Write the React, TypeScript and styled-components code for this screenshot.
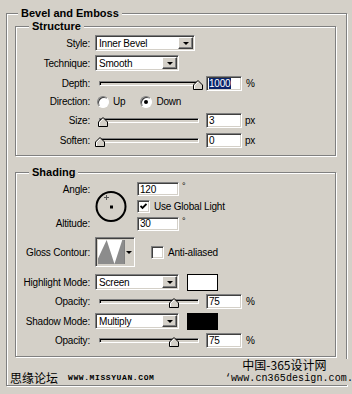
import React from 'react';
import styled, { createGlobalStyle } from 'styled-components';

const GlobalStyle = createGlobalStyle`
  html, body {
    margin: 0;
    padding: 0;
    background: #d4d0c8;
  }
  body {
    width: 352px;
    height: 394px;
    overflow: hidden;
    font-family: "Liberation Sans", Arial, sans-serif;
    font-size: 10px;
    letter-spacing: -0.2px;
    color: #000;
  }
`;

const Group = styled.fieldset<{ $pad: string }>`
  margin: 0;
  padding: ${({ $pad }) => $pad};
  min-width: 0;
  box-sizing: border-box;
  border: 1px solid #808080;
  box-shadow: inset 1px 1px 0 #fff, 1px 1px 0 #fff;
`;

const Outer = styled(Group)`
  width: 341px;
  margin: 7px 0 0 6px;
`;

const Inner = styled(Group)<{ $gap?: number }>`
  width: 321px;
  margin-top: ${({ $gap = 0 }) => $gap}px;
`;

const Legend = styled.legend<{ $ml: number }>`
  margin-left: ${({ $ml }) => $ml}px;
  padding: 0 3px;
  font-weight: bold;
  font-size: 11px;
  line-height: 13px;
  letter-spacing: 0;
  background: #d4d0c8;
`;

const Row = styled.div<{ $h: number; $mt?: number }>`
  display: flex;
  align-items: center;
  height: ${({ $h }) => $h}px;
  margin-top: ${({ $mt = 0 }) => $mt}px;
`;

const Label = styled.span`
  flex: none;
  width: 74px;
  margin-right: 5px;
  text-align: right;
  white-space: nowrap;
`;

const sunken = `
  box-sizing: border-box;
  border: 1px solid;
  border-color: #808080 #fff #fff #808080;
  box-shadow: inset 1px 1px 0 #404040, inset -1px -1px 0 #d4d0c8;
`;

const Field = styled.div<{ $w: number; $h?: number }>`
  ${sunken}
  flex: none;
  width: ${({ $w }) => $w}px;
  height: ${({ $h = 15 }) => $h}px;
  background: #fff;
  display: flex;
  align-items: center;
  padding: 0 2px;
  white-space: nowrap;
  overflow: hidden;
`;

const Picked = styled.span`
  background: #0a246a;
  color: #fff;
  padding-right: 1px;
`;

const SelectText = styled.span`
  flex: 1;
  padding-left: 1px;
`;

const DropButton = styled.span`
  flex: none;
  width: 15px;
  height: 12px;
  box-sizing: border-box;
  background: #d4d0c8;
  border: 1px solid;
  border-color: #fff #404040 #404040 #fff;
  box-shadow: inset -1px -1px 0 #808080;
  display: flex;
  align-items: center;
  justify-content: center;
  margin-right: -1px;
`;

const Arrow = styled.span`
  width: 0;
  height: 0;
  border-left: 3px solid transparent;
  border-right: 3px solid transparent;
  border-top: 3px solid #000;
`;

const Unit = styled.span<{ $ml?: number }>`
  margin-left: ${({ $ml = 4 }) => $ml}px;
`;

const SliderBox = styled.div`
  flex: none;
  width: 111px;
  height: 14px;
  box-sizing: border-box;
  padding: 0 7px 0 4px;
  display: flex;
  align-items: center;
`;

const Track = styled.div`
  position: relative;
  flex: 1;
  height: 5px;
  box-sizing: border-box;
  background: #d4d0c8;
  border: 1px solid;
  border-color: #808080 #fff #fff #808080;
  box-shadow: inset 1px 1px 0 #000;
`;

const Thumb = styled.svg`
  position: absolute;
  top: -2px;
  width: 10px;
  height: 10px;
  margin-left: -5px;
`;

const Slider = ({ value }: { value: number }) => (
  <SliderBox>
    <Track>
      <Thumb viewBox="0 0 10 10" style={{ left: `${value * 100}%` }}>
        <polygon points="5,0.5 9.5,5 9.5,9.5 0.5,9.5 0.5,5" fill="#d4d0c8" stroke="#000" />
        <polyline points="1.5,9 1.5,5.4 5,1.9" fill="none" stroke="#fff" />
      </Thumb>
    </Track>
  </SliderBox>
);

const Radios = styled.div`
  display: flex;
  align-items: center;
  gap: 15px;
  margin-left: 2px;
`;

const Option = styled.label`
  display: flex;
  align-items: center;
  gap: 4px;
`;

const Radio = styled.span<{ $on?: boolean }>`
  width: 12px;
  height: 12px;
  box-sizing: border-box;
  border-radius: 50%;
  background: #fff;
  border: 1px solid;
  border-color: #808080 #fff #fff #808080;
  box-shadow: inset 1px 1px 0 #404040;
  display: flex;
  align-items: center;
  justify-content: center;
  &::after {
    content: '';
    width: 4px;
    height: 4px;
    border-radius: 50%;
    background: ${({ $on }) => ($on ? '#000' : 'transparent')};
  }
`;

const CheckBox = styled.span<{ $ml?: number }>`
  ${sunken}
  flex: none;
  width: 13px;
  height: 13px;
  background: #fff;
  margin-left: ${({ $ml = 0 }) => $ml}px;
  margin-right: 4px;
  display: flex;
  align-items: center;
  justify-content: center;
`;

const Check = ({ on, ml }: { on?: boolean; ml?: number }) => (
  <CheckBox $ml={ml}>
    {on && (
      <svg width="7" height="7" viewBox="0 0 7 7">
        <polyline points="0.5,3 2.5,5 6.5,1" fill="none" stroke="#000" strokeWidth="1.8" />
      </svg>
    )}
  </CheckBox>
);

const AngleGrid = styled.div`
  display: grid;
  grid-template-columns: 74px 37px auto;
  grid-template-rows: 18px 17px 17px;
  column-gap: 5px;
  align-items: center;
  margin-top: 1px;
`;

const GridLabel = styled.span<{ $row: number }>`
  grid-column: 1;
  grid-row: ${({ $row }) => $row};
  text-align: right;
`;

const Cell = styled.div<{ $row: number }>`
  grid-column: 3;
  grid-row: ${({ $row }) => $row};
  display: flex;
  align-items: center;
`;

const Dial = styled.svg`
  grid-column: 2;
  grid-row: 1 / 4;
  width: 33px;
  height: 33px;
`;

const Degree = styled.span`
  align-self: flex-start;
  margin-left: 3px;
  font-size: 9px;
  line-height: 9px;
`;

const Contour = styled.div`
  ${sunken}
  flex: none;
  width: 40px;
  height: 30px;
  padding: 2px 1px 2px 2px;
  display: flex;
`;

const ContourPlot = styled.svg`
  flex: 1;
  height: 100%;
  background: #fff;
`;

const ContourButton = styled.span`
  flex: none;
  width: 8px;
  background: #d4d0c8;
  border-left: 1px solid #808080;
  display: flex;
  align-items: center;
  justify-content: center;
`;

const Swatch = styled.span<{ $color: string }>`
  flex: none;
  width: 31px;
  height: 17px;
  box-sizing: border-box;
  margin-left: 8px;
  border: 1px solid #000;
  background: ${({ $color }) => $color};
`;

const Footer = styled.div`
  height: 28px;
  margin: 0 -17px 0 -6px;
  display: flex;
  justify-content: space-between;
  align-items: flex-end;
`;

const ForumMark = styled.div`
  display: flex;
  align-items: center;
  gap: 10px;
  margin: 0 0 1px 1px;
`;

const ForumName = styled.span`
  font-family: "Noto Sans CJK SC", sans-serif;
  font-size: 12px;
  line-height: 13px;
  letter-spacing: 0;
`;

const ForumUrl = styled.span`
  font-family: "Liberation Mono", monospace;
  font-weight: bold;
  font-size: 8px;
  letter-spacing: 0.6px;
`;

const SiteMark = styled.div`
  display: flex;
  flex-direction: column;
  align-items: center;
  background: #d4d0c8;
  padding-bottom: 1px;
`;

const SiteName = styled.span`
  font-family: "Noto Sans CJK SC", sans-serif;
  font-size: 12px;
  line-height: 12px;
  letter-spacing: 0;
  margin-right: 9px;
`;

const SiteUrl = styled.span`
  font-family: "Liberation Mono", monospace;
  font-size: 10px;
  line-height: 11px;
  letter-spacing: 0.1px;
  margin-top: 2px;
`;

const Select = ({ text, w }: { text: string; w: number }) => (
  <Field $w={w} $h={16}>
    <SelectText>{text}</SelectText>
    <DropButton>
      <Arrow />
    </DropButton>
  </Field>
);

export default function App() {
  return (
    <>
      <GlobalStyle />
      <Outer $pad="0 10px 0 8px">
        <Legend $ml={3}>Bevel and Emboss</Legend>
        <Inner $pad="0 0 5px 0">
          <Legend $ml={13}>Structure</Legend>
          <Row $h={20}>
            <Label>Style:</Label>
            <Select text="Inner Bevel" w={100} />
          </Row>
          <Row $h={20}>
            <Label>Technique:</Label>
            <Select text="Smooth" w={84} />
          </Row>
          <Row $h={20}>
            <Label>Depth:</Label>
            <Slider value={1} />
            <Field $w={36}>
              <Picked>1000</Picked>
            </Field>
            <Unit>%</Unit>
          </Row>
          <Row $h={17}>
            <Label>Direction:</Label>
            <Radios>
              <Option>
                <Radio />
                Up
              </Option>
              <Option>
                <Radio $on />
                Down
              </Option>
            </Radios>
          </Row>
          <Row $h={20}>
            <Label>Size:</Label>
            <Slider value={0.03} />
            <Field $w={36}>3</Field>
            <Unit $ml={3}>px</Unit>
          </Row>
          <Row $h={20}>
            <Label>Soften:</Label>
            <Slider value={0} />
            <Field $w={36}>0</Field>
            <Unit $ml={3}>px</Unit>
          </Row>
        </Inner>
        <Inner $pad="0 0 8px 0" $gap={10}>
          <Legend $ml={13}>Shading</Legend>
          <AngleGrid>
            <GridLabel $row={1}>Angle:</GridLabel>
            <Dial viewBox="0 0 33 33">
              <circle cx="16" cy="16.5" r="14.5" fill="none" stroke="#000" strokeWidth="2" />
              <rect x="15" y="15.5" width="3" height="3" fill="#000" />
              <path d="M11.5 5v5M9 7.5h5" stroke="#555" strokeWidth="1" />
            </Dial>
            <Cell $row={1}>
              <Field $w={42} $h={14}>120</Field>
              <Degree>°</Degree>
            </Cell>
            <Cell $row={2}>
              <Check on />
              Use Global Light
            </Cell>
            <GridLabel $row={3}>Altitude:</GridLabel>
            <Cell $row={3}>
              <Field $w={42} $h={14}>30</Field>
              <Degree>°</Degree>
            </Cell>
          </AngleGrid>
          <Row $h={32} $mt={4}>
            <Label>Gloss Contour:</Label>
            <Contour>
              <ContourPlot viewBox="0 0 30 26" preserveAspectRatio="none">
                <polygon points="0,26 0,20 10,0 19,26 28,0 30,0 30,26" fill="#8c8c8c" />
              </ContourPlot>
              <ContourButton>
                <Arrow />
              </ContourButton>
            </Contour>
            <Check ml={16} />
            Anti-aliased
          </Row>
          <Row $h={20} $mt={4}>
            <Label>Highlight Mode:</Label>
            <Select text="Screen" w={84} />
            <Swatch $color="#fff" />
          </Row>
          <Row $h={18}>
            <Label>Opacity:</Label>
            <Slider value={0.75} />
            <Field $w={36}>75</Field>
            <Unit>%</Unit>
          </Row>
          <Row $h={22}>
            <Label>Shadow Mode:</Label>
            <Select text="Multiply" w={84} />
            <Swatch $color="#000" />
          </Row>
          <Row $h={16}>
            <Label>Opacity:</Label>
            <Slider value={0.75} />
            <Field $w={36}>75</Field>
            <Unit>%</Unit>
          </Row>
        </Inner>
        <Footer>
          <ForumMark>
            <ForumName>思缘论坛</ForumName>
            <ForumUrl>WWW.MISSYUAN.COM</ForumUrl>
          </ForumMark>
          <SiteMark>
            <SiteName>中国-365设计网</SiteName>
            <SiteUrl>‘www.cn365design.com.</SiteUrl>
          </SiteMark>
        </Footer>
      </Outer>
    </>
  );
}
